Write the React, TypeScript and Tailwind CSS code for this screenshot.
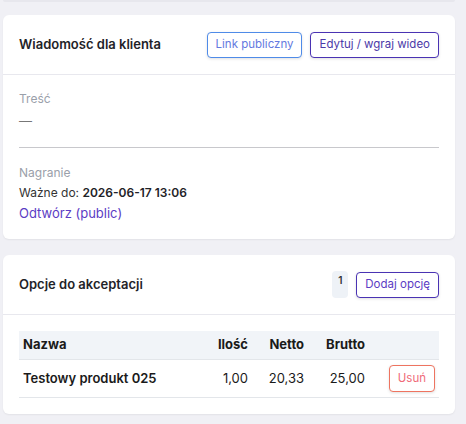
const outlineBtn =
	"h-[26px] whitespace-nowrap rounded-[4px] border bg-white px-2 text-[11.5px] leading-none shadow-[0_1px_3px_rgba(0,0,0,0.12)]";

function CardHeader({ title, children }: { title: string; children: React.ReactNode }) {
	return (
		<div className="flex h-[60px] items-center justify-between border-b border-[#e8e8ee] pl-4 pr-4">
			<h3 className="text-[13px] font-semibold text-[#1f2328]">{title}</h3>
			<div className="flex items-center gap-2">{children}</div>
		</div>
	);
}

export default function App() {
	return (
		<div
			className="min-h-[424px] bg-[#f0f0f5] pl-[3px] pr-[11px]"
			style={{ fontFamily: "Inter, 'Noto Sans', sans-serif" }}
		>
			<div className="h-[2px] rounded-b-md bg-[#e7e7ed]" />

			{/* Wiadomość */}
			<div className="mt-[13px] rounded-md bg-white shadow-[0_1px_2px_rgba(0,0,0,0.06)]">
				<CardHeader title="Wiadomość dla klienta">
					<button type="button" className={`${outlineBtn} border-[#4f8be8] text-[#6479e0]`}>
						Link publiczny
					</button>
					<button type="button" className={`${outlineBtn} border-[#4a33b3] text-[#4b3aa8]`}>
						Edytuj / wgraj wideo
					</button>
				</CardHeader>
				<div className="px-4 pb-4 pt-4">
					<div className="text-[12px] leading-4 text-[#9aa0aa]">Treść</div>
					<div className="mt-1 text-[13px] leading-5 text-[#777]">—</div>
					<div className="mt-4 border-t border-[#c8c8cc]" />
					<div className="mt-[17px] text-[12px] leading-4 text-[#9aa0aa]">Nagranie</div>
					<div className="mt-0.5 text-[12px] leading-5 text-[#333]">
						Ważne do: <span className="font-semibold text-[#1f2328]">2026-06-17 13:06</span>
					</div>
					<a className="block text-[13px] leading-5 text-[#5b3cc4]">Odtwórz (public)</a>
				</div>
			</div>

			{/* Opcje */}
			<div className="mt-4 rounded-md bg-white shadow-[0_1px_2px_rgba(0,0,0,0.06)]">
				<CardHeader title="Opcje do akceptacji">
					<span className="flex h-[27px] w-4 justify-center rounded-[4px] bg-[#eef2f7] pt-[4px] text-[10px] font-semibold leading-none text-[#333]">
						1
					</span>
					<button type="button" className={`${outlineBtn} border-[#4a33b3] text-[#5b3cc4]`}>
						Dodaj opcję
					</button>
				</CardHeader>
				<div className="px-4 pb-4 pt-4">
					<div className="grid grid-cols-[1fr_56px_56px_61px_70px] text-[13px] text-[#1a1a1a]">
						<div className="flex h-[29px] items-center border-b border-[#e3e6ea] bg-[#f1f4f8] px-1 font-bold">Nazwa</div>
						<div className="flex h-[29px] items-center justify-end border-b border-[#e3e6ea] bg-[#f1f4f8] px-1 font-bold">Ilość</div>
						<div className="flex h-[29px] items-center justify-end border-b border-[#e3e6ea] bg-[#f1f4f8] px-1 font-bold">Netto</div>
						<div className="flex h-[29px] items-center justify-end border-b border-[#e3e6ea] bg-[#f1f4f8] px-1 font-bold">Brutto</div>
						<div className="h-[29px] border-b border-[#e3e6ea] bg-[#f1f4f8]" />

						<div className="flex h-[38px] items-center border-b border-[#e3e6ea] px-1 font-semibold">Testowy produkt 025</div>
						<div className="flex h-[38px] items-center justify-end border-b border-[#e3e6ea] px-1">1,00</div>
						<div className="flex h-[38px] items-center justify-end border-b border-[#e3e6ea] px-1">20,33</div>
						<div className="flex h-[38px] items-center justify-end border-b border-[#e3e6ea] px-1">25,00</div>
						<div className="flex h-[38px] items-center justify-end border-b border-[#e3e6ea] px-1">
							<button type="button" className={`${outlineBtn} h-[27px] border-[#ee7460] text-[#f06a78]`}>
								Usuń
							</button>
						</div>
					</div>
				</div>
			</div>
		</div>
	);
}
